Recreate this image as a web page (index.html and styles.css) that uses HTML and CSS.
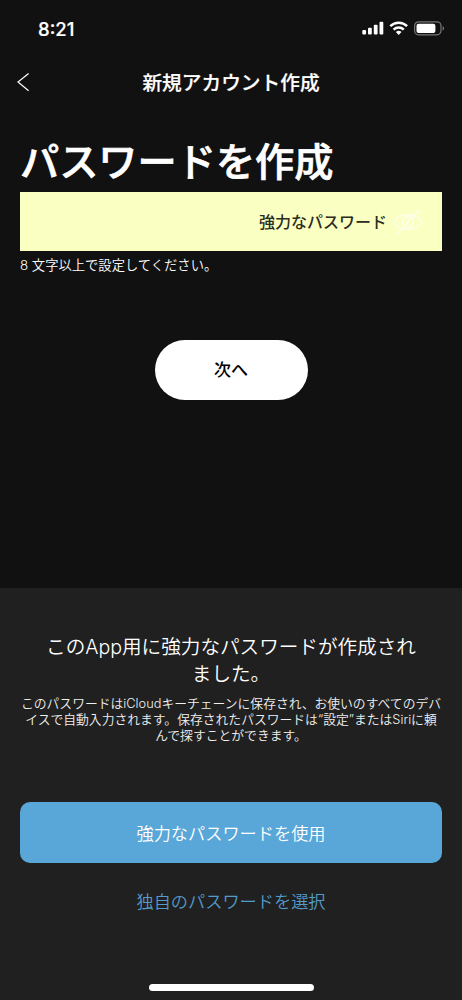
FILE: index.html
```html
<!DOCTYPE html>
<html lang="ja">
<head>
<meta charset="utf-8">
<title>新規アカウント作成</title>
<link rel="stylesheet" href="styles.css">
</head>
<body>
<div class="screen">
  <header class="status">
    <span class="time">8:21</span>
    <svg class="status-icons" width="84" height="16" viewBox="0 0 84 16">
      <g fill="#fff">
        <rect x="0.3" y="10" width="3.800" height="4.600" rx="1"/>
        <rect x="6" y="7.800" width="3.800" height="6.800" rx="1"/>
        <rect x="11.800" y="4.800" width="3.800" height="9.800" rx="1"/>
        <rect x="17.500" y="1.800" width="3.800" height="12.800" rx="1"/>
      </g>
      <g fill="none" stroke="#fff" stroke-width="2.500">
        <path d="M28.300 6.200a12 12 0 0 1 16.800 0"/>
        <path d="M31.600 9.700a7.300 7.300 0 0 1 10.200 0"/>
      </g>
      <path fill="#fff" d="M33.900 12a4 4 0 0 1 5.600 0L36.700 15z"/>
      <rect x="52.600" y="1.800" width="26.400" height="13" rx="4" fill="none" stroke="#777" stroke-width="1.200"/>
      <rect x="54.500" y="3.700" width="18.900" height="9.200" rx="2" fill="#fff"/>
      <path fill="#777" d="M80.600 6.200c2 .7 2 3.600 0 4.300z"/>
    </svg>
  </header>
  <nav class="nav">
    <svg class="back" width="13" height="20" viewBox="0 0 13 20"><path d="M11.600 1.500L1 10l10.600 8.700" fill="none" stroke="#fff" stroke-width="1.200"/></svg>
    <span class="nav-title">新規アカウント作成</span>
  </nav>
  <main class="form">
    <h1 class="heading">パスワードを作成</h1>
    <div class="field">
      <span class="field-text">強力なパスワード</span>
      <svg class="eye" width="32" height="30" viewBox="0 0 32 30" fill="none" stroke="#fff" stroke-width="1.400">
        <path d="M2 15C8 5 24 5 30 15C24 25 8 25 2 15z"/><circle cx="16" cy="15" r="5.500"/><path d="M27.500 2.500L4.500 27.500"/><path d="M14 17.500l4-5"/>
      </svg>
    </div>
    <p class="hint">8 文字以上で設定してください。</p>
    <button class="next">次へ</button>
  </main>
  <section class="sheet">
    <h2 class="sheet-title">このApp用に強力なパスワードが作成され<br>ました。</h2>
    <p class="sheet-text">このパスワードはiCloudキーチェーンに保存され、お使いのすべてのデバ<br>イスで自動入力されます。保存されたパスワードは“設定”またはSiriに頼<br>んで探すことができます。</p>
    <button class="use">強力なパスワードを使用</button>
    <button class="choose">独自のパスワードを選択</button>
    <div class="home"></div>
  </section>
</div>
</body>
</html>
```
FILE: styles.css
```css
* { box-sizing: border-box; margin: 0; padding: 0; }
body { background: #111; }
button { border: 0; background: none; font: inherit; color: inherit; }
.screen {
  width: 462px; height: 1000px; display: flex; flex-direction: column;
  overflow: hidden; background: #111; color: #fff;
  font-family: Inter, "Noto Sans CJK JP", sans-serif;
  white-space: nowrap;
}
.status { height: 56px; display: flex; justify-content: space-between; padding: 18px 16px 0 38px; }
.time { font-size: 18.500px; line-height: 22px; font-weight: 500; -webkit-text-stroke: .2px #fff; }
.status-icons { margin-top: 2px; }
.nav { height: 54px; display: grid; grid-template-columns: 1fr auto 1fr; align-items: center; padding: 0 17px 2px; }
.nav-title { font-size: 19.700px; font-weight: 500; padding-bottom: 1px; -webkit-text-stroke: .2px #fff; }
.form { height: 478px; padding: 23px 20px 0; display: flex; flex-direction: column; }
.heading { height: 59px; font-size: 39.200px; line-height: 57px; font-weight: 500; -webkit-text-stroke: .7px #fff; }
.field {
  height: 59px; flex: none; display: flex; align-items: center; justify-content: flex-end;
  gap: 5px; padding-right: 18px; background: #faffc2; color: #2b2c20;
  font-size: 16px; font-weight: 500;
}
.field-text { padding-bottom: 2px; }
.eye { opacity: .7; }
.hint { font-size: 13.300px; line-height: 20px; margin-top: 4px; font-weight: 350; }
.next {
  width: 153px; height: 60px; flex: none; margin-top: 65px; padding-bottom: 3px; align-self: center;
  border-radius: 30px; background: #fff; color: #000; font-size: 17px; font-weight: 500;
}
.sheet { flex: 1; background: #202020; padding: 46px 20px 9px; display: flex; flex-direction: column; align-items: center; text-align: center; font-weight: 350; }
.sheet-title { font-size: 19.600px; line-height: 27px; font-weight: 350; }
.sheet-text { font-size: 12.800px; line-height: 16px; margin-top: 8px; color: #f0f0f0; }
.use { width: 422px; height: 61px; flex: none; margin-top: 58px; padding-bottom: 1px; border-radius: 10px; background: #59a7d8; font-size: 17.200px; }
.choose { margin-top: 26px; font-size: 17.200px; line-height: 26px; color: #539bc9; }
.home { width: 165px; height: 7px; border-radius: 4px; margin-top: auto; background: #fff; }
```
